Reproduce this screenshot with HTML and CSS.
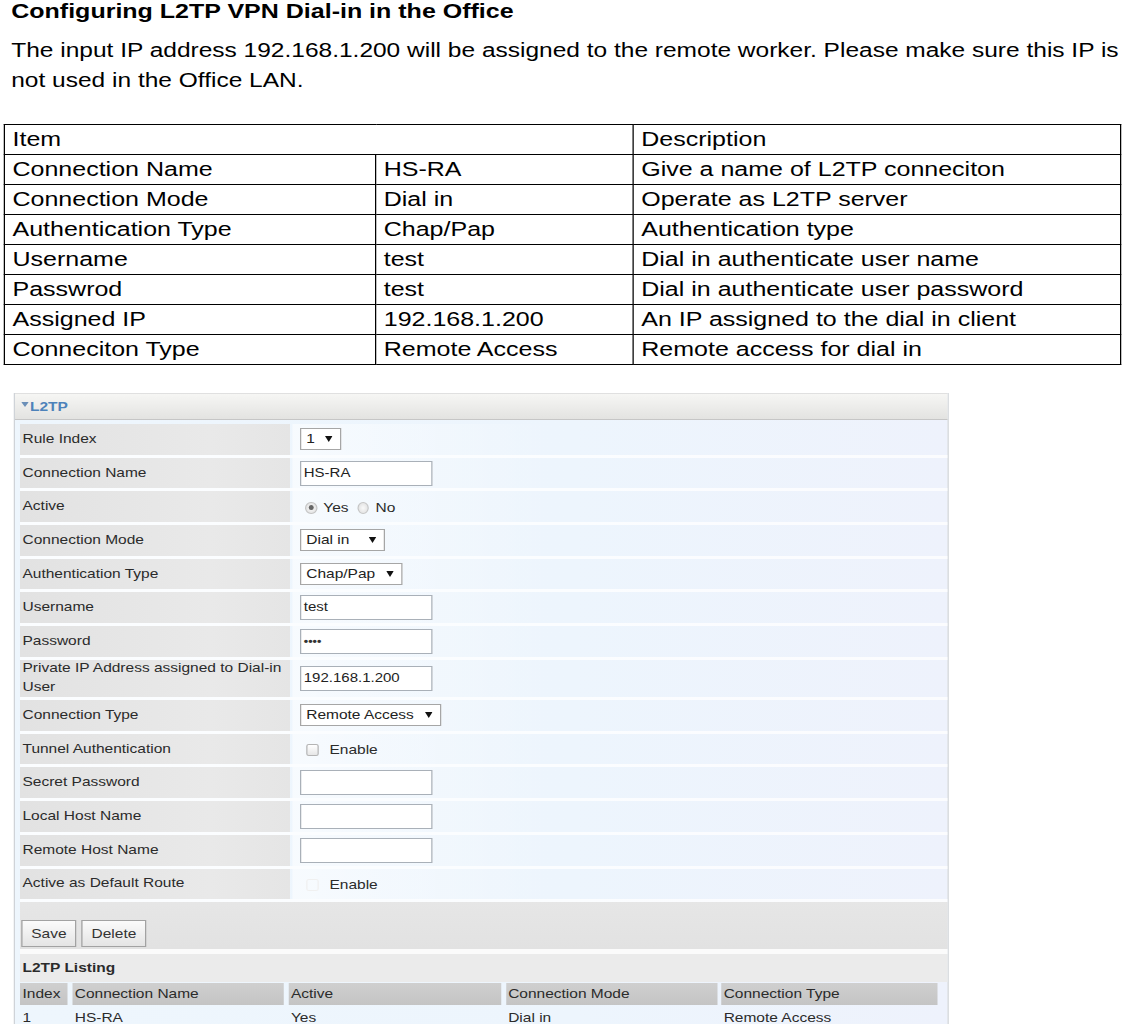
FILE: index.html
```html
<!DOCTYPE html>
<html>
<head>
<meta charset="utf-8">
<title>L2TP VPN Dial-in</title>
<link rel="stylesheet" href="styles.css">
</head>
<body>
<div class="page">
  <h1 class="title">Configuring L2TP VPN Dial-in in the Office</h1>
  <p class="intro">The input IP address 192.168.1.200 will be assigned to the remote worker. Please make sure this IP is<br>not used in the Office LAN.</p>

  <table class="spec">
    <colgroup><col class="c1"><col class="c2"><col class="c3"></colgroup>
    <tr><td colspan="2">Item</td><td>Description</td></tr>
    <tr><td>Connection Name</td><td>HS-RA</td><td>Give a name of L2TP conneciton</td></tr>
    <tr><td>Connection Mode</td><td>Dial in</td><td>Operate as L2TP server</td></tr>
    <tr><td>Authentication Type</td><td>Chap/Pap</td><td>Authentication type</td></tr>
    <tr><td>Username</td><td>test</td><td>Dial in authenticate user name</td></tr>
    <tr><td>Passwrod</td><td>test</td><td>Dial in authenticate user password</td></tr>
    <tr><td>Assigned IP</td><td>192.168.1.200</td><td>An IP assigned to the dial in client</td></tr>
    <tr><td>Conneciton Type</td><td>Remote Access</td><td>Remote access for dial in</td></tr>
  </table>

  <div class="panel">
    <div class="panel-head"><svg class="caret" width="6" height="5" viewBox="0 0 6 5"><polygon points="0,0 6,0 3,5" fill="#6b8fb8"/></svg>L2TP</div>
    <div class="form">
      <div class="row"><div class="lbl">Rule Index</div><div class="val"><span class="sel w-idx">1<svg class="arr" width="6" height="6" viewBox="0 0 6 6"><polygon points="0,0 6,0 3,6" fill="#111"/></svg></span></div></div>
      <div class="row"><div class="lbl">Connection Name</div><div class="val"><span class="inp">HS-RA</span></div></div>
      <div class="row"><div class="lbl">Active</div><div class="val opts"><span class="radio on"></span><span class="opt">Yes</span><span class="radio"></span><span class="opt">No</span></div></div>
      <div class="row"><div class="lbl">Connection Mode</div><div class="val"><span class="sel w-mode">Dial in<svg class="arr" width="6" height="6" viewBox="0 0 6 6"><polygon points="0,0 6,0 3,6" fill="#111"/></svg></span></div></div>
      <div class="row"><div class="lbl">Authentication Type</div><div class="val"><span class="sel w-auth">Chap/Pap<svg class="arr" width="6" height="6" viewBox="0 0 6 6"><polygon points="0,0 6,0 3,6" fill="#111"/></svg></span></div></div>
      <div class="row"><div class="lbl">Username</div><div class="val"><span class="inp">test</span></div></div>
      <div class="row"><div class="lbl">Password</div><div class="val"><span class="inp pw">••••</span></div></div>
      <div class="row tall"><div class="lbl">Private IP Address assigned to Dial-in User</div><div class="val"><span class="inp">192.168.1.200</span></div></div>
      <div class="row"><div class="lbl">Connection Type</div><div class="val"><span class="sel w-type">Remote Access<svg class="arr" width="6" height="6" viewBox="0 0 6 6"><polygon points="0,0 6,0 3,6" fill="#111"/></svg></span></div></div>
      <div class="row"><div class="lbl">Tunnel Authentication</div><div class="val opts"><span class="check"></span><span class="opt">Enable</span></div></div>
      <div class="row"><div class="lbl">Secret Password</div><div class="val"><span class="inp"></span></div></div>
      <div class="row"><div class="lbl">Local Host Name</div><div class="val"><span class="inp"></span></div></div>
      <div class="row"><div class="lbl">Remote Host Name</div><div class="val"><span class="inp"></span></div></div>
      <div class="row"><div class="lbl">Active as Default Route</div><div class="val opts"><span class="check faint"></span><span class="opt">Enable</span></div></div>
    </div>
    <div class="actions"><span class="btn">Save</span><span class="btn">Delete</span></div>
    <div class="list-title">L2TP Listing</div>
    <div class="list-row head">
      <span class="cell w1">Index</span><span class="cell w2">Connection Name</span><span class="cell w3">Active</span><span class="cell w4">Connection Mode</span><span class="cell w5">Connection Type</span>
    </div>
    <div class="list-row">
      <span class="cell w1">1</span><span class="cell w2">HS-RA</span><span class="cell w3">Yes</span><span class="cell w4">Dial in</span><span class="cell w5">Remote Access</span>
    </div>
  </div>
</div>
</body>
</html>
```

FILE: styles.css
```css
html, body {
  margin: 0;
  padding: 0;
  background: #fff;
  overflow: hidden;
}

body {
  font-family: "Liberation Sans", Arial, sans-serif;
  color: #000;
}

/* the reference document is stretched horizontally by 1.25 */
.page {
  width: 899px;
  transform: scaleX(1.25);
  transform-origin: 0 0;
}

.title {
  margin: 0;
  padding-left: 9px;
  font-size: 20px;
  font-weight: bold;
  line-height: 23px;
}

.intro {
  margin: 12px 0 0;
  padding-left: 9px;
  font-size: 19.6px;
  line-height: 30px;
  white-space: nowrap;
}

.spec {
  margin: 29px 0 0 3px;
  border-collapse: collapse;
  width: 893px;
  font-size: 20px;
  table-layout: fixed;
}

.spec .c1 { width: 297px; }
.spec .c2 { width: 206px; }
.spec .c3 { width: 390px; }

.spec td {
  border: 1px solid #000;
  padding: 3px 6px;
  line-height: 23px;
  height: 23px;
  white-space: nowrap;
}

/* ---------- router panel ---------- */
.panel {
  margin: 28px 0 0 11px;
  width: 746px;
  border-left: 1px solid #cfd3d8;
  border-right: 1px solid #cfd3d8;
  background: linear-gradient(to right, #eef6fd 0%, #edf5fd 60%, #eef2fc 100%);
  font-size: 12.4px;
  color: #2b2b2b;
}

.panel-head {
  height: 25px;
  display: flex;
  align-items: center;
  padding-left: 5px;
  background: linear-gradient(#f6f6f4, #e3e3e1);
  border-top: 1px solid #e0e0e0;
  border-bottom: 1px solid #c6c6c6;
  font-weight: bold;
  color: #4d82ba;
}

.caret {
  margin-right: 1px;
  margin-top: -5px;
}

.form {
  padding-top: 4px;
}

.row {
  display: flex;
  height: 30.7px;
  border-bottom: 3px solid rgba(255, 255, 255, 0.75);
  margin-left: 4px;
}

.row.tall {
  height: 37.3px;
}

.lbl {
  width: 214px;
  padding-left: 2px;
  display: flex;
  align-items: center;
  background: linear-gradient(to right, #e2e2e2, #e9e9e9 70%, #e5e5e5);
  line-height: 19px;
}

.val {
  flex: 1;
  margin-left: 2px;
  padding-left: 6px;
  display: flex;
  align-items: center;
  background: linear-gradient(to right, rgba(255, 255, 255, 0.55), rgba(255, 255, 255, 0) 40%);
}

.inp {
  box-sizing: border-box;
  width: 106px;
  height: 25px;
  border: 1px solid #a9b0b8;
  background: #fff;
  padding-left: 2px;
  font-size: 12px;
  line-height: 23px;
  color: #222;
}

.inp.pw {
  font-size: 10px;
  letter-spacing: 0;
  font-weight: bold;
  color: #333;
}

.sel {
  box-sizing: border-box;
  height: 22px;
  border: 1px solid #a6a6a6;
  background: #fff;
  display: flex;
  align-items: center;
  justify-content: space-between;
  padding: 0 6px 0 4px;
  font-size: 12.4px;
  color: #222;
}

.arr { flex: none; }

.w-idx { width: 33px; }
.w-mode { width: 68px; }
.w-auth { width: 82px; }
.w-type { width: 113px; }

.opts {
  padding-top: 2px;
}

.radio {
  box-sizing: border-box;
  width: 9.6px;
  height: 12px;
  border-radius: 50%;
  border: 1px solid #c5c5c5;
  background: radial-gradient(#fafafa, #dcdcdc);
  margin-left: 4px;
  position: relative;
}

.radio.on::after {
  content: "";
  position: absolute;
  left: 2px;
  top: 2.5px;
  width: 3.6px;
  height: 5px;
  border-radius: 50%;
  background: #666;
}

.opt {
  margin-left: 5px;
  margin-right: 3px;
}

.check {
  box-sizing: border-box;
  width: 9.6px;
  height: 12px;
  border: 1px solid #b4b4b4;
  border-radius: 2px;
  background: linear-gradient(#fff, #e6e6e6);
  margin-left: 5px;
  margin-right: 4px;
}

.check.faint {
  border-color: #f0f0f0;
  background: transparent;
}

.actions {
  margin-left: 4px;
  height: 52px;
  box-sizing: border-box;
  padding: 18px 0 0 1px;
  display: flex;
  align-items: flex-start;
  gap: 4px;
  background: linear-gradient(#e6e6e6, #e2e2e2);
  border-bottom: 5px solid #fbfbfb;
}

.btn {
  box-sizing: border-box;
  height: 27px;
  padding: 0 7px;
  display: flex;
  align-items: center;
  border: 1px solid #a2a2a2;
  background: linear-gradient(#fbfbfb, #e4e4e4);
  color: #333;
}

.list-title {
  margin-left: 4px;
  height: 28px;
  padding-left: 2px;
  display: flex;
  align-items: center;
  background: #ebebeb;
  font-weight: bold;
}

.list-row {
  margin: 1px 0 0 4px;
  display: flex;
  gap: 3.4px;
  height: 22px;
}

.list-row.head .cell {
  background: linear-gradient(#cfcfcf, #c4c4c4);
}

.list-row + .list-row:not(.head) {
  margin-top: 2px;
}

.cell {
  padding-left: 2px;
  display: flex;
  align-items: center;
  box-sizing: border-box;
}

.w1 { width: 38.4px; }
.w2 { width: 169.6px; }
.w3 { width: 170.4px; }
.w4 { width: 169px; }
.w5 { width: 172.8px; }
```
